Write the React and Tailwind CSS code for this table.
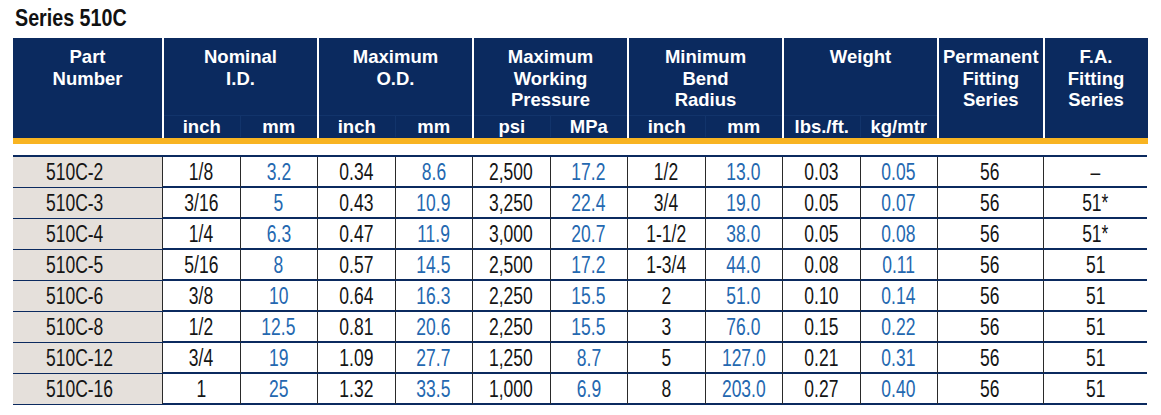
import React from "react";

const rows = [
  ["510C-2", "1/8", "3.2", "0.34", "8.6", "2,500", "17.2", "1/2", "13.0", "0.03", "0.05", "56", "–"],
  ["510C-3", "3/16", "5", "0.43", "10.9", "3,250", "22.4", "3/4", "19.0", "0.05", "0.07", "56", "51*"],
  ["510C-4", "1/4", "6.3", "0.47", "11.9", "3,000", "20.7", "1-1/2", "38.0", "0.05", "0.08", "56", "51*"],
  ["510C-5", "5/16", "8", "0.57", "14.5", "2,500", "17.2", "1-3/4", "44.0", "0.08", "0.11", "56", "51"],
  ["510C-6", "3/8", "10", "0.64", "16.3", "2,250", "15.5", "2", "51.0", "0.10", "0.14", "56", "51"],
  ["510C-8", "1/2", "12.5", "0.81", "20.6", "2,250", "15.5", "3", "76.0", "0.15", "0.22", "56", "51"],
  ["510C-12", "3/4", "19", "1.09", "27.7", "1,250", "8.7", "5", "127.0", "0.21", "0.31", "56", "51"],
  ["510C-16", "1", "25", "1.32", "33.5", "1,000", "6.9", "8", "203.0", "0.27", "0.40", "56", "51"],
];

const groups = [
  { title: ["Nominal", "I.D."], subs: ["inch", "mm"] },
  { title: ["Maximum", "O.D."], subs: ["inch", "mm"] },
  { title: ["Maximum", "Working", "Pressure"], subs: ["psi", "MPa"] },
  { title: ["Minimum", "Bend", "Radius"], subs: ["inch", "mm"] },
  { title: ["Weight"], subs: ["lbs./ft.", "kg/mtr"] },
];

const COLS = "grid-cols-[149px_77.5px_77.5px_77.5px_77.5px_77.5px_77.5px_77.5px_77.5px_77.5px_77.5px_105.5px_105px]";
const SANS = { fontFamily: '"Liberation Sans", Arial, sans-serif' };

export default function App() {
  return (
    <div className="w-[1161px] h-[415px] bg-white overflow-hidden" style={SANS}>
      <div className="pl-[15px] pt-[4px] h-[38px]">
        <h1 className="text-[24px] leading-[28px] font-bold text-[#111]">
          <span className="inline-block origin-left scale-x-[0.82]">Series 510C</span>
        </h1>
      </div>

      <div className="ml-[13px] w-[1135px]">
        {/* Header */}
        <div
          className={`grid ${COLS} h-[100px] bg-[#0b2a5f] text-white font-bold text-[18.5px] leading-[21.5px]`}
        >
          <div className="flex flex-col items-center pt-[8px] text-center">
            <span>Part</span>
            <span>Number</span>
          </div>
          {groups.map((g, i) => (
            <div
              key={i}
              className="col-span-2 flex flex-col border-l-2 border-white pt-[8px]"
            >
              <div className="flex flex-col items-center text-center">
                {g.title.map((t) => (
                  <span key={t}>{t}</span>
                ))}
              </div>
              <div className="mt-auto grid grid-cols-2 border-t border-[#12346b] pb-[1px]">
                <span className="text-center border-r border-[#12346b]">{g.subs[0]}</span>
                <span className="text-center">{g.subs[1]}</span>
              </div>
            </div>
          ))}
          <div className="flex flex-col items-center border-l-2 border-white pt-[8px] text-center">
            <span>Permanent</span>
            <span>Fitting</span>
            <span>Series</span>
          </div>
          <div className="flex flex-col items-center border-l-2 border-white pt-[8px] text-center">
            <span>F.A.</span>
            <span>Fitting</span>
            <span>Series</span>
          </div>
        </div>
        <div className="h-[6px] bg-[#f8b422]" />
        <div className="h-[11px]" />

        {/* Body */}
        <div className="border-t-2 border-[#0b2a5f] w-[1134px]">
          {rows.map((r, ri) => (
            <div
              key={ri}
              className={`grid ${COLS} h-[31px] border-b-2 border-[#0b2a5f] text-[23px] leading-[29px]`}
            >
              {r.map((c, ci) => {
                if (ci === 0) {
                  return (
                    <div key={ci} className="bg-[#e5e0db] pl-[33px] pt-[1px] text-[#151515]">
                      <span className="inline-block origin-left scale-x-[0.76]">{c}</span>
                    </div>
                  );
                }
                const blue = ci % 2 === 0 && ci <= 10;
                return (
                  <div
                    key={ci}
                    className={`border-l border-[#2a2a2a] text-center pt-[1px] ${
                      blue ? "text-[#2468b0]" : "text-[#151515]"
                    }`}
                  >
                    <span className="inline-block origin-center scale-x-[0.76]">{c}</span>
                  </div>
                );
              })}
            </div>
          ))}
        </div>
      </div>
    </div>
  );
}
